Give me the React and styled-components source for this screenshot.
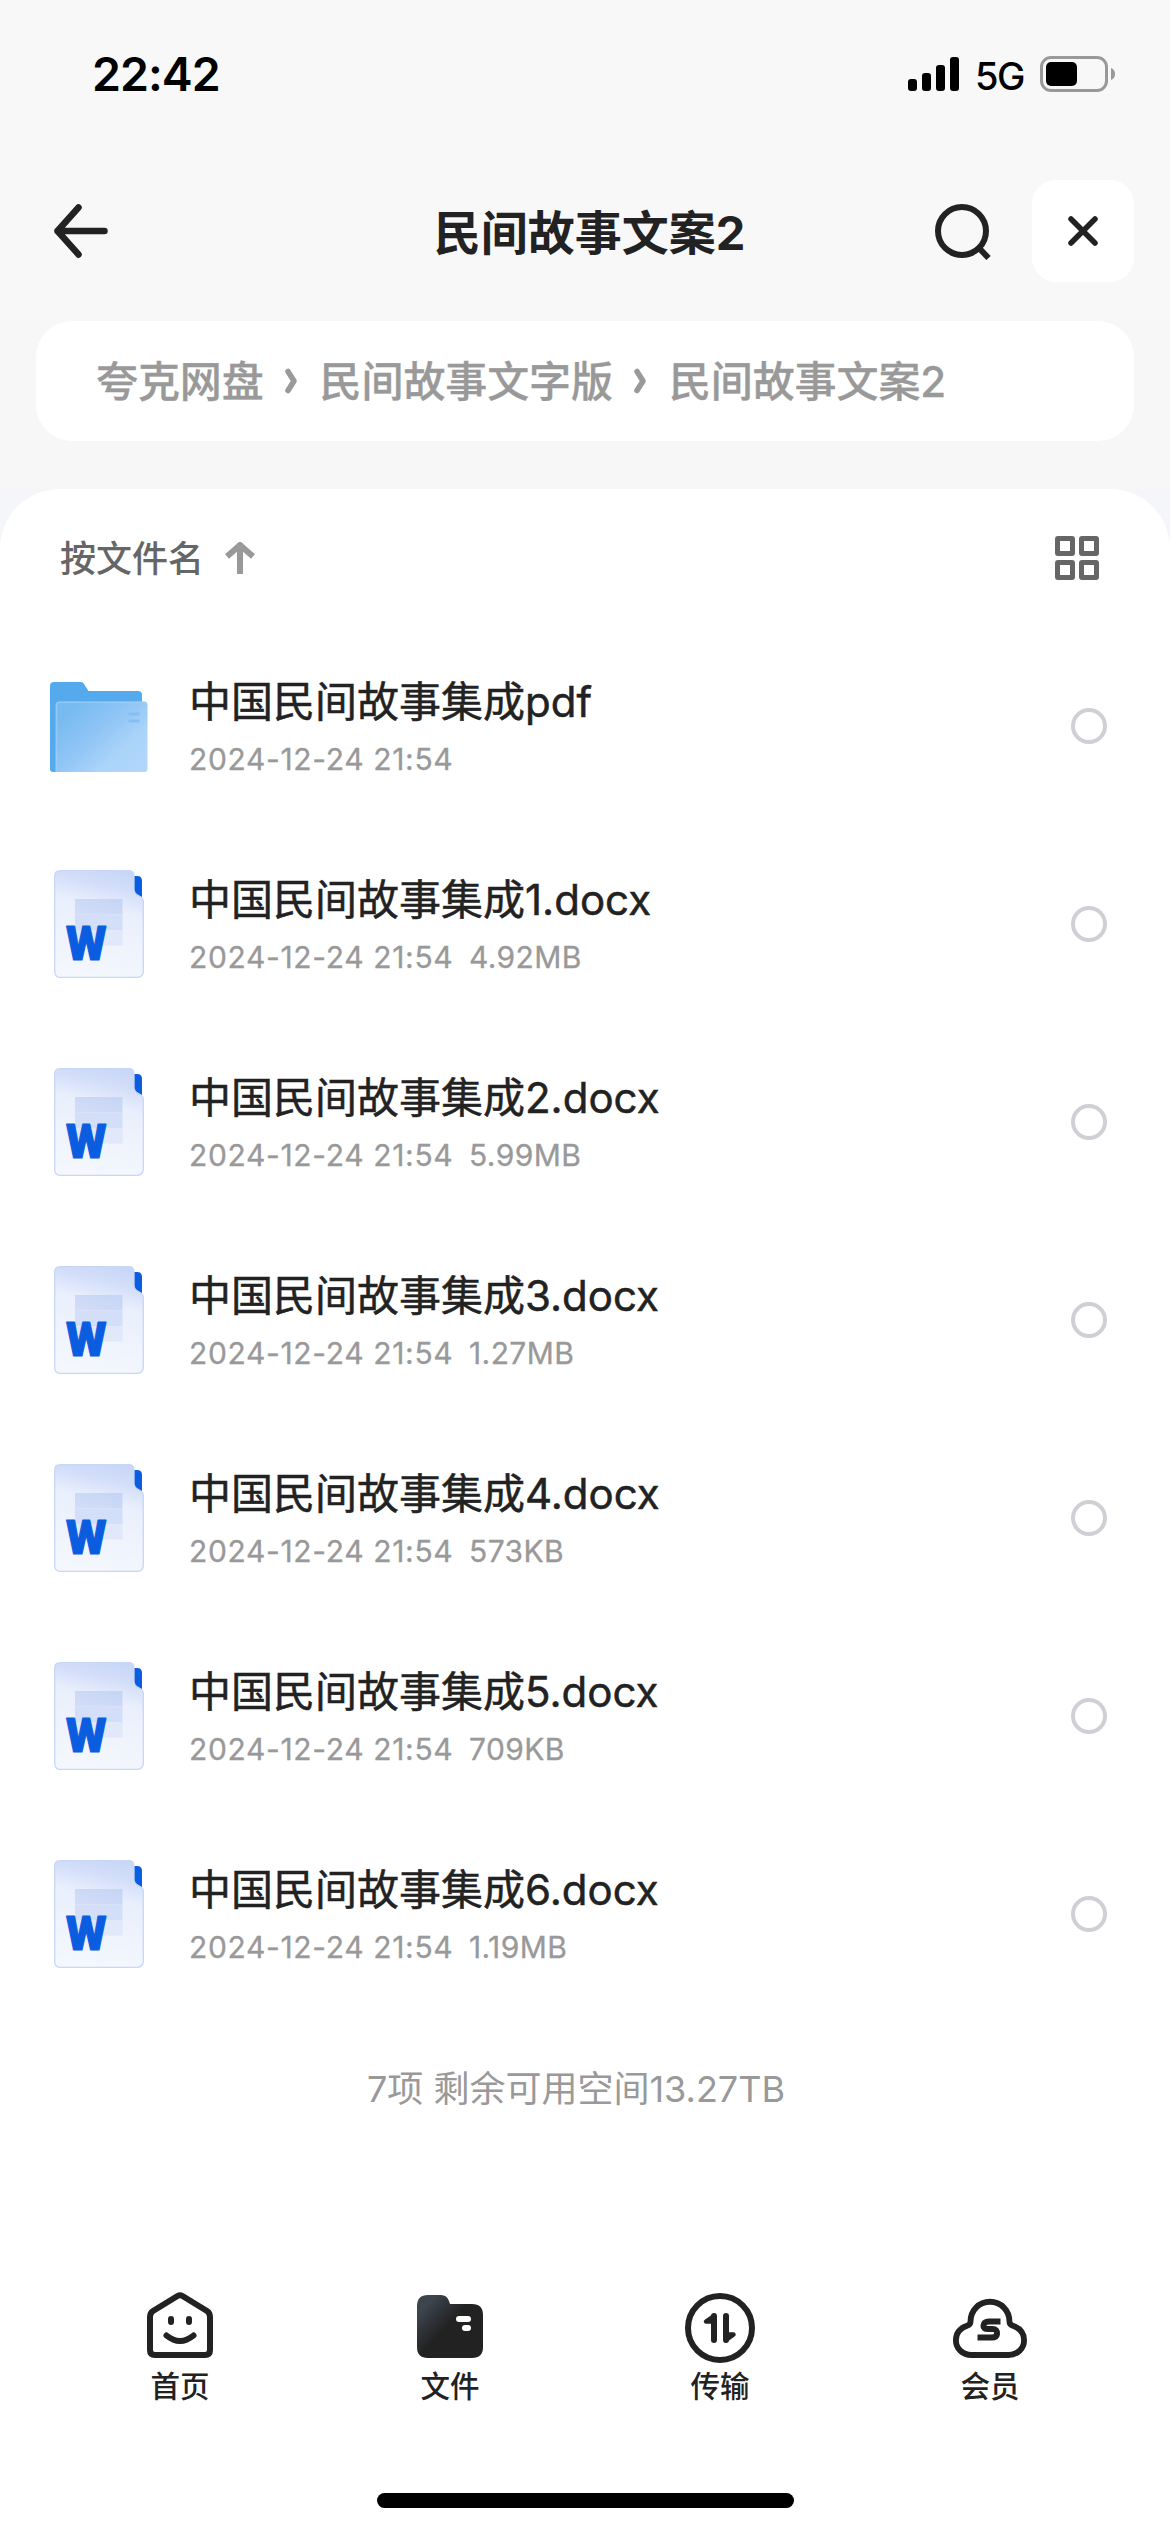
import styled, { createGlobalStyle } from "styled-components";

const GlobalStyle = createGlobalStyle`
  * {
    box-sizing: border-box;
  }
  body {
    margin: 0;
    background: #fff;
    font-family: Inter, "Noto Sans CJK SC", sans-serif;
    color: #222;
  }
  svg {
    display: block;
  }
`;

const Container = styled.div`
  width: 1170px;
  height: 2532px;
  display: flex;
  flex-direction: column;
  overflow: hidden;
  background: #fff;
`;

const StatusBar = styled.div`
  height: 148px;
  padding: 0 54px 0 92px;
  display: flex;
  justify-content: space-between;
  align-items: center;
  background: #f8f8f8;
  color: #000;
`;
const Time = styled.span`
  font-size: 46.5px;
  font-weight: 600;
  letter-spacing: -1px;
`;
const StatusIcons = styled.div`
  display: flex;
  align-items: center;
`;
const Network = styled.span`
  width: 48px;
  margin: 3px 17px 0 16px;
  font-size: 38px;
  font-weight: 500;
  letter-spacing: -1.6px;
  white-space: nowrap;
`;

const Header = styled.div`
  height: 173px;
  padding: 0 36px 7px 54px;
  display: grid;
  grid-template-columns: 201px 1fr 210px;
  align-items: center;
  background: #f8f8f8;
`;
const Title = styled.div`
  padding-top: 3px;
  font-size: 47px;
  font-weight: 700;
  line-height: 60px;
  text-align: center;
  white-space: nowrap;
`;
const HeaderActions = styled.div`
  display: flex;
  align-items: center;
  justify-content: flex-end;
  gap: 41px;
`;
const CloseButton = styled.div`
  width: 102px;
  height: 102px;
  border-radius: 24px;
  background: #fff;
  display: flex;
  align-items: center;
  justify-content: center;
`;

const PathArea = styled.div`
  height: 168px;
  padding: 0 36px;
  background: #f7f7f7;
`;
const PathBar = styled.div`
  height: 120px;
  padding: 0 60px;
  border-radius: 36px;
  background: #fff;
  display: flex;
  align-items: center;
  color: #999;
`;
const PathItem = styled.span`
  padding-top: 1px;
  font-size: 42px;
  font-weight: 500;
  line-height: 60px;
  letter-spacing: -0.1px;
  white-space: nowrap;
  -webkit-text-stroke: 0.3px #999;
`;
const PathArrow = styled.svg`
  margin: 0 21px 0 19px;
`;

const PanelWrap = styled.div`
  flex: 1;
  background: #f5f6f9;
`;
const Panel = styled.div`
  height: 100%;
  border-radius: 60px 60px 0 0;
  background: #fff;
  display: flex;
  flex-direction: column;
`;
const SortBar = styled.div`
  height: 138px;
  padding: 0 71px 0 60px;
  display: flex;
  justify-content: space-between;
  align-items: center;
  color: #666;
`;
const SortButton = styled.div`
  display: flex;
  align-items: center;
  gap: 21px;
  font-size: 36px;
  font-weight: 500;
`;
const SortText = styled.span`
  padding-bottom: 5px;
`;

const FileList = styled.div`
  display: flex;
  flex-direction: column;
`;
const FileRow = styled.div`
  height: 198px;
  padding: 0 63px 0 48px;
  display: flex;
  align-items: center;
`;
const FileIcon = styled.div`
  width: 102px;
  margin-right: 39px;
  padding-top: ${(props) => (props.$folder ? "2px" : "0")};
  display: flex;
  justify-content: center;
`;
const FileInfo = styled.div`
  flex: 1;
  padding-top: 1px;
`;
const FileName = styled.div`
  height: 60px;
  line-height: 60px;
  font-size: 42px;
  font-weight: 400;
  -webkit-text-stroke: 0.5px #222;
`;
const FileMeta = styled.div`
  height: 44px;
  margin-top: 5px;
  line-height: 44px;
  display: flex;
  gap: 17px;
  font-size: 30px;
  color: #999;
  -webkit-text-stroke: 0.3px #999;
`;
const FileDate = styled.span`
  width: 263px;
  letter-spacing: 0.65px;
  white-space: nowrap;
`;
const FileSize = styled.span`
  letter-spacing: 0.4px;
`;
const Radio = styled.div`
  width: 36px;
  height: 36px;
  border: 4px solid #cfcfd6;
  border-radius: 50%;
`;

const Usage = styled.div`
  margin-top: 50px;
  padding-right: 18px;
  line-height: 52px;
  text-align: center;
  font-size: 36px;
  color: #999;
`;

const TabBar = styled.div`
  margin-top: auto;
  height: 207px;
  padding: 0 45px;
  display: grid;
  grid-template-columns: repeat(4, 1fr);
`;
const Tab = styled.div`
  display: flex;
  flex-direction: column;
  align-items: center;
`;
const TabLabel = styled.span`
  margin-top: 2px;
  font-size: 29.5px;
  font-weight: 500;
  line-height: 40px;
`;
const HomeIndicator = styled.div`
  width: 417px;
  height: 15px;
  margin: 0 auto 24px 377px;
  border-radius: 8px;
  background: #000;
`;

const SignalIcon = () => (
  <svg width="51" height="34" viewBox="0 0 51 34">
    <rect x="0" y="22" width="9" height="12" rx="3" />
    <rect x="14" y="16" width="9" height="18" rx="3" />
    <rect x="28" y="8" width="9" height="26" rx="3" />
    <rect x="42" y="0" width="9" height="34" rx="3" />
  </svg>
);

const BatteryIcon = () => (
  <svg width="76" height="36" viewBox="0 0 76 36">
    <rect x="1.5" y="1.5" width="65" height="33" rx="9.5" fill="none" stroke="#999" strokeWidth="3" />
    <rect x="6" y="6" width="31" height="24" rx="5" />
    <path d="M71 12c2.700 1 4 3.300 4 6s-1.300 5-4 6z" fill="#999" />
  </svg>
);

const BackIcon = () => (
  <svg width="54" height="54" viewBox="0 0 54 54" fill="none" stroke="#222" strokeWidth="6.500" strokeLinecap="round" strokeLinejoin="round">
    <path d="M24.500 3.500L3.500 27l21 23.500M3.500 27h47" />
  </svg>
);

const SearchIcon = () => (
  <svg width="58" height="58" viewBox="0 0 58 58" fill="none" stroke="#222" strokeWidth="6">
    <circle cx="29" cy="29" r="24" />
    <path d="M45.500 45.500l10 10.500" />
  </svg>
);

const CloseIcon = () => (
  <svg width="30" height="30" viewBox="0 0 30 30" stroke="#222" strokeWidth="5.500" strokeLinecap="round">
    <path d="M3 3l24 24M27 3L3 27" />
  </svg>
);

const SortArrow = () => (
  <svg width="30" height="32" viewBox="0 0 30 32" fill="none" stroke="#999" strokeWidth="6" strokeLinejoin="round">
    <path d="M2 14.500L15 3l13 11.500M15 3v29" />
  </svg>
);

const GridIcon = () => (
  <svg width="44" height="44" viewBox="0 0 44 44" fill="none" stroke="#666" strokeWidth="5">
    <rect x="2.500" y="2.500" width="15" height="15" rx="0.500" />
    <rect x="26.500" y="2.500" width="15" height="15" rx="0.500" />
    <rect x="2.500" y="26.500" width="15" height="15" rx="0.500" />
    <rect x="26.500" y="26.500" width="15" height="15" rx="0.500" />
  </svg>
);

const FolderIcon = () => (
  <svg width="98" height="90" viewBox="0 0 98 90">
    <defs>
      <linearGradient id="folderFront" x1="0.100" y1="0.200" x2="0.900" y2="0.900">
        <stop offset="0" stopColor="#78bbf0" />
        <stop offset="0.400" stopColor="#90c5f5" />
        <stop offset="0.750" stopColor="#abd4f9" />
        <stop offset="1" stopColor="#b0d6fa" />
      </linearGradient>
    </defs>
    <path d="M0 4a4 4 0 0 1 4-4h27q2 0 3 2l4.500 7H88a4 4 0 0 1 4 4v20L20 90H3a3 3 0 0 1-3-3z" fill="#55aaee" />
    <path d="M5.500 90V23q0-3.500 3.500-3.500h85q3.500 0 3.500 3.500v63.500q0 3.500-3.500 3.500z" fill="url(#folderFront)" />
    <path d="M6.500 90V23q0-2.800 2.800-2.800h84.400q2.800 0 2.800 2.800" fill="none" stroke="#a4d2f8" strokeOpacity="0.600" strokeWidth="1.500" />
    <path d="M78.500 32h11M78.500 39h11" stroke="#83bff5" strokeWidth="3" />
  </svg>
);

const DocIcon = () => (
  <svg width="90" height="108" viewBox="0 0 90 108">
    <defs>
      <linearGradient id="docPage" x1="0.650" y1="0" x2="0.450" y2="1">
        <stop offset="0" stopColor="#c9d7f7" />
        <stop offset="0.150" stopColor="#d3def9" />
        <stop offset="0.350" stopColor="#e9effc" />
        <stop offset="1" stopColor="#f4f7fd" />
      </linearGradient>
      <linearGradient id="docBlock" x1="0" y1="1" x2="1" y2="0">
        <stop offset="0" stopColor="#d3def7" />
        <stop offset="1" stopColor="#c5d4f5" />
      </linearGradient>
    </defs>
    <path d="M80 6h3q5 0 5 5v16h-8z" fill="#0b5de0" />
    <path
      d="M6 .700h69q5 0 5 5V19q0 4 3.500 6l3.500 2q2.300 1.500 2.300 4v70q0 6-6 6.300H6q-5.300 0-5.300-6V6Q.700.700 6 .700z"
      fill="url(#docPage)"
      stroke="#c8d7f8"
      strokeWidth="1.300"
    />
    <path d="M21 29h47.500v15.500H21z" fill="url(#docBlock)" />
    <path d="M21 44.500h47.500V60H21z" fill="#d3def8" />
    <path d="M21 60h47.500v15.500H21z" fill="#e1e8f9" />
    <text
      x="12"
      y="89.500"
      fontFamily="Roboto"
      fontWeight="900"
      fontSize="49"
      textLength="40.500"
      lengthAdjust="spacingAndGlyphs"
      fill="#0b5de0"
      stroke="#0b5de0"
      strokeWidth="1.200"
      strokeLinejoin="round"
    >
      W
    </text>
  </svg>
);

const HomeIcon = () => (
  <svg width="78" height="78" viewBox="0 0 78 78" fill="none" stroke="#222" strokeWidth="6" strokeLinecap="round" strokeLinejoin="round">
    <path d="M36.500 10q2.500-1.400 5 0L66 25q3 2 3 6v33q0 5-5 5H14q-5 0-5-5V31q0-4 3-6z" />
    <path d="M30 33v3M48 33v3" />
    <path d="M25.500 49.500q13.500 11 27 0" />
  </svg>
);

const FilesIcon = () => (
  <svg width="78" height="78" viewBox="0 0 78 78">
    <defs>
      <linearGradient id="tabFolder" x1="0.050" y1="0.150" x2="0.450" y2="0.500">
        <stop offset="0.150" stopColor="#3c444d" />
        <stop offset="1" stopColor="#222" />
      </linearGradient>
    </defs>
    <path d="M6 20Q6 9 17 9h13q6 0 8 6l1 3h22q11 0 11 11v32q0 11-11 11H17Q6 72 6 61z" fill="url(#tabFolder)" />
    <rect x="45" y="30" width="15" height="6" rx="3" fill="#fff" />
    <rect x="51" y="39" width="9" height="6" rx="3" fill="#fff" />
  </svg>
);

const TransferIcon = () => (
  <svg width="78" height="78" viewBox="0 0 78 78" fill="none" stroke="#222" strokeWidth="6" strokeLinecap="round" strokeLinejoin="round">
    <circle cx="39" cy="42" r="32" />
    <path d="M33 30v24M45 30v24" />
    <path d="M33 30l-8 5.500h8M45 54l7.500-5.500H45" fill="#222" strokeWidth="4.500" />
  </svg>
);

const MemberIcon = () => (
  <svg width="78" height="78" viewBox="0 0 78 78" fill="none" stroke="#222" strokeWidth="6">
    <path d="M20 69c-9 0-16-6.500-16-15 0-7 4.500-12.500 12-15q3-1 3-4c0-11 8.500-20 20-20s20 9 20 20q0 3 3 4c7.500 2.500 12 8 12 15 0 8.500-7 15-16 15z" transform="translate(1 1) scale(.974 .986)" />
    <path d="M49.500 35.500H38q-5 0-5.500 4-.500 3.500 4.500 3.500h4.500q5 0 4.500 5-.500 3.500-5 3.500H26.500" />
  </svg>
);

const path = ["夸克网盘", "民间故事文字版", "民间故事文案2"];

const files = [
  { id: 1, name: "中国民间故事集成pdf", folder: true },
  { id: 2, name: "中国民间故事集成1.docx", size: "4.92MB" },
  { id: 3, name: "中国民间故事集成2.docx", size: "5.99MB" },
  { id: 4, name: "中国民间故事集成3.docx", size: "1.27MB" },
  { id: 5, name: "中国民间故事集成4.docx", size: "573KB" },
  { id: 6, name: "中国民间故事集成5.docx", size: "709KB" },
  { id: 7, name: "中国民间故事集成6.docx", size: "1.19MB" },
];

const tabs = [
  { label: "首页", icon: <HomeIcon /> },
  { label: "文件", icon: <FilesIcon /> },
  { label: "传输", icon: <TransferIcon /> },
  { label: "会员", icon: <MemberIcon /> },
];

const Breadcrumb = () => (
  <PathBar>
    {path.map((item, i) => [
      i > 0 && (
        <PathArrow key={"arrow" + item} width="16" height="26" viewBox="0 0 16 26" fill="none" stroke="#999" strokeWidth="5.500" strokeLinecap="round" strokeLinejoin="round">
          <path d="M5 3.500l6 9.500-6 9.500" />
        </PathArrow>
      ),
      <PathItem key={item}>{item}</PathItem>,
    ])}
  </PathBar>
);

const App = () => {
  return (
    <Container>
      <GlobalStyle />
      <StatusBar>
        <Time>22:42</Time>
        <StatusIcons>
          <SignalIcon />
          <Network>5G</Network>
          <BatteryIcon />
        </StatusIcons>
      </StatusBar>
      <Header>
        <BackIcon />
        <Title>民间故事文案2</Title>
        <HeaderActions>
          <SearchIcon />
          <CloseButton>
            <CloseIcon />
          </CloseButton>
        </HeaderActions>
      </Header>
      <PathArea>
        <Breadcrumb />
      </PathArea>
      <PanelWrap>
        <Panel>
          <SortBar>
            <SortButton>
              <SortText>按文件名</SortText>
              <SortArrow />
            </SortButton>
            <GridIcon />
          </SortBar>
          <FileList>
            {files.map((file) => (
              <FileRow key={file.id}>
                <FileIcon $folder={file.folder}>
                  {file.folder ? <FolderIcon /> : <DocIcon />}
                </FileIcon>
                <FileInfo>
                  <FileName>{file.name}</FileName>
                  <FileMeta>
                    <FileDate>2024-12-24 21:54</FileDate>
                    {file.size && <FileSize>{file.size}</FileSize>}
                  </FileMeta>
                </FileInfo>
                <Radio />
              </FileRow>
            ))}
          </FileList>
          <Usage>7项 剩余可用空间13.27TB</Usage>
          <TabBar>
            {tabs.map((tab) => (
              <Tab key={tab.label}>
                {tab.icon}
                <TabLabel>{tab.label}</TabLabel>
              </Tab>
            ))}
          </TabBar>
          <HomeIndicator />
        </Panel>
      </PanelWrap>
    </Container>
  );
};

export default App;
